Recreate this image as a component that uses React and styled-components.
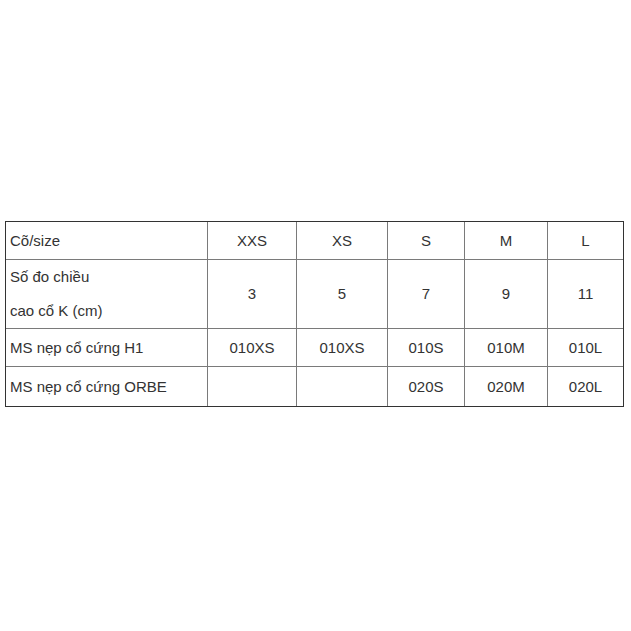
import React from "react";
import styled, { createGlobalStyle } from "styled-components";

const Global = createGlobalStyle`
  html, body { margin: 0; padding: 0; background: #fff; }
  body { font-family: "Liberation Sans", Arial, sans-serif; }
`;

const Page = styled.div`
  width: 631px;
  height: 631px;
  padding: 221px 0 0 5px;
  box-sizing: border-box;
`;

const Table = styled.div`
  display: grid;
  width: 619px;
  box-sizing: border-box;
  grid-template-columns: 201px 88px 90px 76px 82px 75px;
  grid-template-rows: 37px 68px 37px 39px;
  gap: 1px;
  background: #7a7a7a;
  border: 1px solid #333;
`;

const Cell = styled.div`
  background: #fff;
  display: flex;
  flex-direction: column;
  justify-content: center;
  align-items: ${(p) => (p.$head ? "flex-start" : "center")};
  padding: ${(p) => (p.$head ? "0 0 0 4px" : "0")};
  font-size: 15px;
  line-height: 34px;
  color: #333;
  white-space: nowrap;
`;

const rows = [
  [["Cõ/size"], "XXS", "XS", "S", "M", "L"],
  [["Số đo chiều", "cao cổ K (cm)"], "3", "5", "7", "9", "11"],
  [["MS nẹp cổ cứng H1"], "010XS", "010XS", "010S", "010M", "010L"],
  [["MS nẹp cổ cứng ORBE"], "", "", "020S", "020M", "020L"],
];

export default function App() {
  return (
    <>
      <Global />
      <Page>
        <Table>
          {rows.map((r, i) => (
            <React.Fragment key={i}>
              <Cell $head>
                {r[0].map((l) => (
                  <span key={l}>{l}</span>
                ))}
              </Cell>
              {r.slice(1).map((v, j) => (
                <Cell key={j}>{v}</Cell>
              ))}
            </React.Fragment>
          ))}
        </Table>
      </Page>
    </>
  );
}
